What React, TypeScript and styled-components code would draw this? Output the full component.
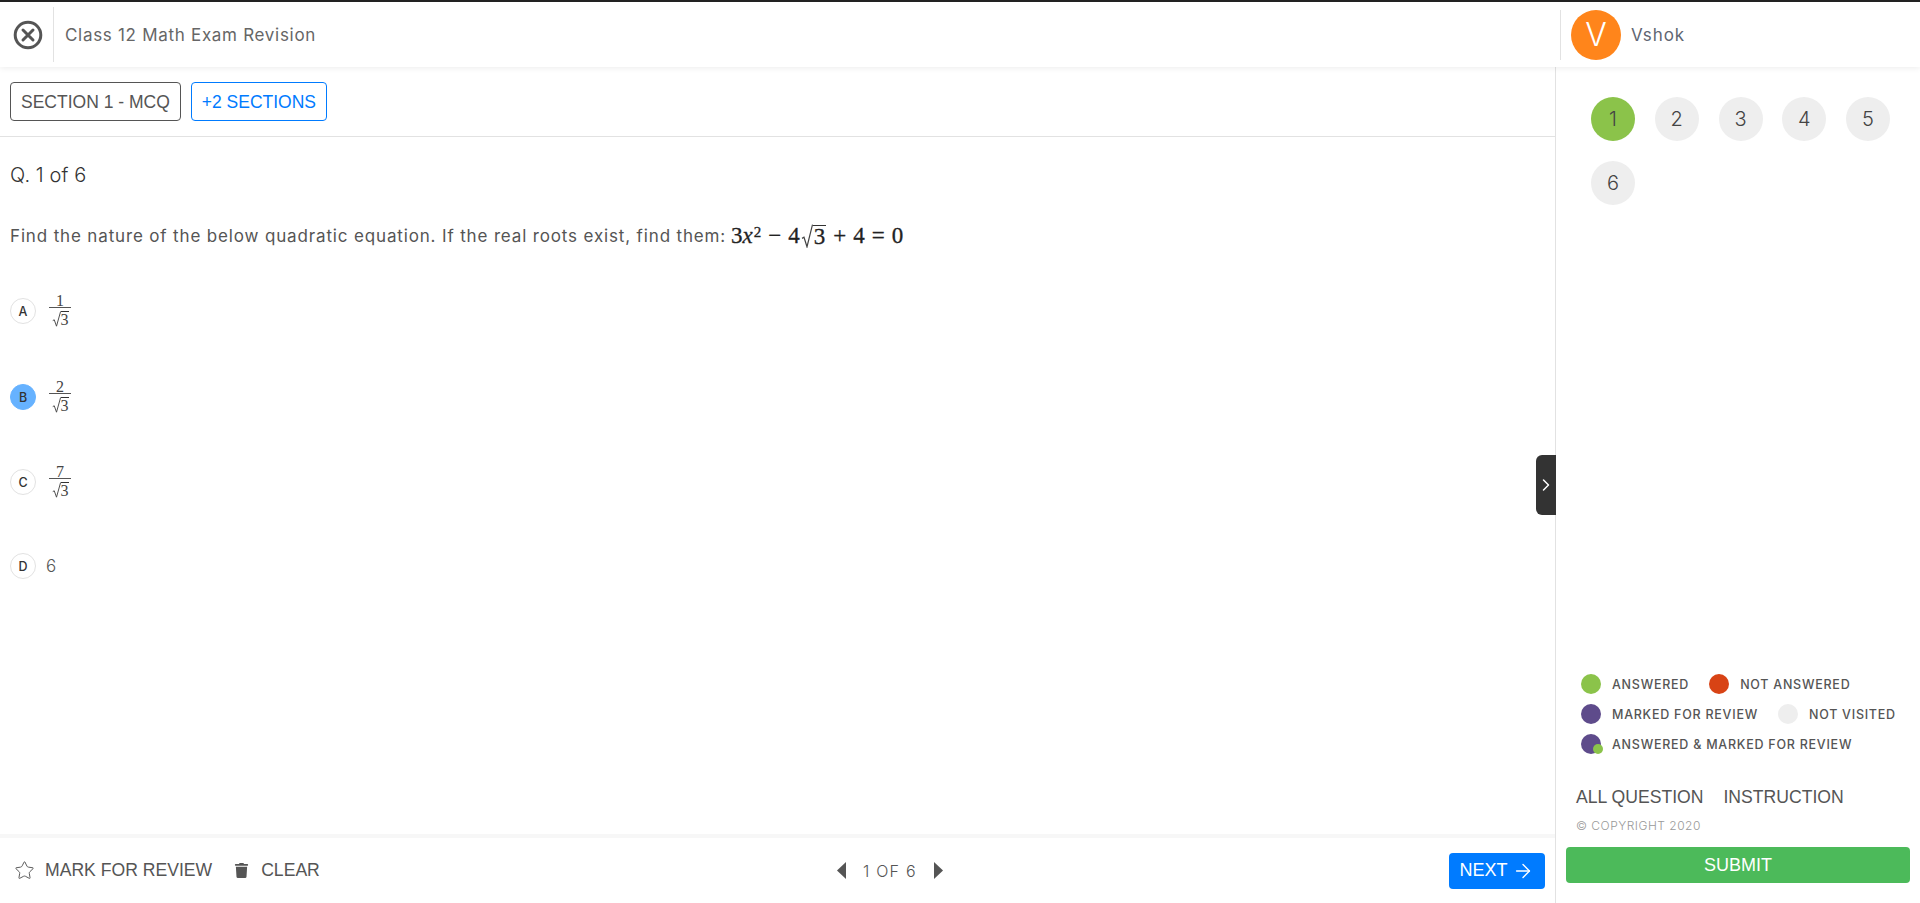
import styled, { createGlobalStyle } from 'styled-components'
import { ArrowRight, ChevronRight, Star } from 'lucide-react'
import { FaTrash } from 'react-icons/fa'

const GlobalStyle = createGlobalStyle`
  html, body {
    margin: 0;
    padding: 0;
    background: #fff;
    font-family: "Inter", "Liberation Sans", sans-serif;
  }
  * { box-sizing: border-box; }
`

const Page = styled.div`
  height: 903px;
  display: flex;
  flex-direction: column;
  overflow: hidden;
  border-top: 2px solid #222;
`

const Header = styled.header`
  height: 65px;
  flex-shrink: 0;
  display: flex;
  align-items: center;
  position: relative;
  z-index: 2;
  background: #fff;
  box-shadow: 0 1px 6px rgba(0, 0, 0, 0.08);
`

const CloseCell = styled.div`
  width: 54px;
  height: 55px;
  display: flex;
  align-items: center;
  justify-content: center;
  padding-left: 2px;
  border-right: 1px solid #e2e2e2;
`

const CourseTitle = styled.div`
  flex: 1;
  padding-left: 11px;
  font-size: 17px;
  color: #666;
  letter-spacing: 0.7px;
`

const UserCell = styled.div`
  width: 360px;
  height: 50px;
  display: flex;
  align-items: center;
  gap: 10px;
  padding-left: 10px;
  border-left: 1px solid #e2e2e2;
`

const Avatar = styled.div`
  width: 50px;
  height: 50px;
  border-radius: 50%;
  background: #ff851b;
  color: #fff;
  font-size: 32px;
  font-weight: 300;
  display: flex;
  align-items: center;
  justify-content: center;
`

const UserName = styled.div`
  font-size: 17px;
  color: #5f6672;
  letter-spacing: 0.9px;
`

const Body = styled.div`
  flex: 1;
  min-height: 0;
  display: flex;
`

const Main = styled.main`
  width: 1556px;
  position: relative;
  display: flex;
  flex-direction: column;
  border-right: 1px solid #e2e2e2;
`

const SectionBar = styled.div`
  height: 70px;
  flex-shrink: 0;
  display: flex;
  align-items: center;
  gap: 10px;
  padding: 0 10px 0;
  border-bottom: 1px solid #e2e2e2;
`

const SectionButton = styled.button<{ $active?: boolean }>`
  height: 39px;
  padding: 1px 10px 0;
  background: #fff;
  border-radius: 4px;
  border: 1px solid ${(p) => (p.$active ? '#555' : '#007bff')};
  color: ${(p) => (p.$active ? '#555' : '#007bff')};
  font-family: "Liberation Sans", sans-serif;
  font-size: 17.5px;
`

const QuestionArea = styled.section`
  flex: 1;
  min-height: 0;
  padding: 0 10px;
`

const QuestionCount = styled.div`
  margin-top: 26px;
  height: 24px;
  line-height: 24px;
  font-size: 20px;
  font-weight: 300;
  color: #333;
  letter-spacing: 0.1px;
`

const QuestionText = styled.div`
  margin-top: 34px;
  height: 30px;
  display: flex;
  align-items: center;
  gap: 5px;
  font-size: 17px;
  color: #555;
  letter-spacing: 0.85px;
`

const MathLine = styled.span`
  display: inline-flex;
  align-items: center;
  font-family: "Liberation Serif", serif;
  font-size: 23px;
  letter-spacing: 0;
  color: #222;
  -webkit-text-stroke: 0.3px #222;
`

const Sup = styled.sup`
  font-size: 15px;
  line-height: 0;
  position: relative;
  top: -4px;
  margin-left: 1px;
`

const MathOp = styled.span`
  margin: 0 7px;
`

const Surd = styled.span`
  display: inline-flex;
  align-items: flex-end;
  margin-left: 1px;
`

const SurdBody = styled.span<{ $small?: boolean }>`
  border-top: 1px solid #333;
  padding: 0 ${(p) => (p.$small ? '0' : '1px')};
  line-height: ${(p) => (p.$small ? '15px' : '22px')};
`

const OptionList = styled.div`
  margin-top: 17px;
  display: flex;
  flex-direction: column;
`

const OptionRow = styled.div<{ $height: number }>`
  height: ${(p) => p.$height}px;
  display: flex;
  align-items: center;
  gap: 13px;
`

const OptionBadge = styled.div<{ $selected?: boolean }>`
  width: 26px;
  height: 26px;
  flex-shrink: 0;
  border-radius: 50%;
  display: flex;
  align-items: center;
  justify-content: center;
  font-size: 12.5px;
  font-weight: 500;
  color: #333;
  background: ${(p) => (p.$selected ? '#66b2ff' : '#fff')};
  border: 1px solid ${(p) => (p.$selected ? '#66b2ff' : '#e2e2e2')};
`

const Fraction = styled.span`
  display: inline-flex;
  flex-direction: column;
  align-items: center;
  width: 22px;
  padding-bottom: 2px;
  font-family: "Liberation Serif", serif;
  font-size: 16px;
  color: #444;
`

const Numerator = styled.span`
  width: 100%;
  height: 15px;
  line-height: 15px;
  text-align: center;
  border-bottom: 1px solid #555;
`

const Denominator = styled.span`
  margin-top: 3px;
  display: flex;
  align-items: flex-end;
`

const PlainAnswer = styled.span`
  margin-left: -3px;
  font-size: 17px;
  font-weight: 300;
  color: #555;
`

const Footer = styled.footer`
  height: 69px;
  flex-shrink: 0;
  display: flex;
  justify-content: space-between;
  align-items: center;
  padding: 0 10px 0 14px;
  border-top: 4px solid #f7f7f7;
`

const FooterLeft = styled.div`
  display: flex;
  align-items: center;
  gap: 22px;
`

const FooterAction = styled.button<{ $gap: number }>`
  display: flex;
  align-items: center;
  gap: ${(p) => p.$gap}px;
  padding: 0;
  border: 0;
  background: none;
  font-family: "Liberation Sans", sans-serif;
  font-size: 17.6px;
  color: #555;
`

const Pager = styled.div`
  display: flex;
  align-items: center;
  gap: 17px;
  margin-left: 11px;
  color: #555;
  font-size: 16px;
  font-weight: 300;
`

const PagerText = styled.span`
  letter-spacing: 1.2px;
`

const NextButton = styled.button`
  width: 96px;
  height: 36px;
  display: flex;
  align-items: center;
  justify-content: center;
  gap: 5px;
  border: 0;
  border-radius: 4px;
  background: #007bff;
  color: #fff;
  font-family: "Liberation Sans", sans-serif;
  font-size: 18px;
`

const DrawerToggle = styled.div`
  position: absolute;
  right: -1px;
  top: 388px;
  width: 20px;
  height: 60px;
  border-radius: 6px 0 0 6px;
  background: #333;
  color: #fff;
  display: flex;
  align-items: center;
  justify-content: center;
`

const Aside = styled.aside`
  flex: 1;
  min-width: 0;
  display: flex;
  flex-direction: column;
  padding: 30px 10px 20px;
`

const NumberGrid = styled.div`
  display: flex;
  flex-wrap: wrap;
  gap: 20px 19.75px;
  padding-left: 25px;
`

const NumberDot = styled.div<{ $current?: boolean }>`
  width: 44px;
  height: 44px;
  border-radius: 50%;
  display: flex;
  align-items: center;
  justify-content: center;
  font-size: 20px;
  font-weight: 300;
  color: #444;
  background: ${(p) => (p.$current ? '#8bc34a' : '#eee')};
`

const Legend = styled.div`
  margin-top: auto;
  padding-left: 15px;
  display: flex;
  flex-direction: column;
  gap: 10px;
`

const LegendRow = styled.div`
  height: 20px;
  display: flex;
  align-items: center;
`

const LegendDot = styled.span<{ $color: string; $badge?: boolean }>`
  position: relative;
  width: 20px;
  height: 20px;
  flex-shrink: 0;
  border-radius: 50%;
  background: ${(p) => p.$color};
  margin-right: 11px;

  ${(p) =>
    p.$badge &&
    `&::after {
      content: "";
      position: absolute;
      right: -2px;
      bottom: 0;
      width: 10px;
      height: 10px;
      border-radius: 50%;
      background: #8bc34a;
    }`}
`

const LegendLabel = styled.span`
  font-size: 12.5px;
  font-weight: 500;
  color: #555;
  margin-right: 20px;
  letter-spacing: 0.75px;
  white-space: nowrap;
`

const AsideLinks = styled.div`
  margin-top: 33px;
  padding-left: 10px;
  display: flex;
  gap: 20px;
  font-family: "Liberation Sans", sans-serif;
  font-size: 17.6px;
  color: #555;
`

const Copyright = styled.div`
  margin-top: 10px;
  padding-left: 10px;
  font-size: 12px;
  font-weight: 300;
  color: #999;
  letter-spacing: 0.5px;
`

const SubmitButton = styled.button`
  width: 344px;
  height: 36px;
  margin-top: 14px;
  border: 0;
  border-radius: 4px;
  background: #4cba5a;
  color: #fff;
  font-family: "Liberation Sans", sans-serif;
  font-size: 18px;
`

const CloseIcon = () => (
  <svg width="30" height="30" viewBox="0 0 30 30" fill="none" stroke="#555" strokeWidth="3">
    <circle cx="15" cy="15" r="12.8" />
    <path d="M10 10 L20 20 M20 10 L10 20" strokeLinecap="round" />
  </svg>
)

const Caret = ({ points }: { points: string }) => (
  <svg width="9" height="17" viewBox="0 0 9 17" fill="#555">
    <polygon points={points} />
  </svg>
)

const RadicalSign = ({ height, width }: { height: number; width: number }) => (
  <svg width={width} height={height} viewBox="0 0 12 20" preserveAspectRatio="none" fill="none" stroke="#444">
    <path d="M1 12 L3 11 L6 19 L11.5 0.5" strokeWidth="1.2" />
  </svg>
)

const Root3 = () => (
  <Denominator>
    <RadicalSign width={9} height={16} />
    <SurdBody $small>3</SurdBody>
  </Denominator>
)

const options = [
  { key: 'A', numerator: '1', height: 86 },
  { key: 'B', numerator: '2', height: 86, selected: true },
  { key: 'C', numerator: '7', height: 84 },
]

const App = () => {
  return (
    <>
      <GlobalStyle />
      <Page>
        <Header>
          <CloseCell>
            <CloseIcon />
          </CloseCell>
          <CourseTitle>Class 12 Math Exam Revision</CourseTitle>
          <UserCell>
            <Avatar>V</Avatar>
            <UserName>Vshok</UserName>
          </UserCell>
        </Header>
        <Body>
          <Main>
            <SectionBar>
              <SectionButton $active>SECTION 1 - MCQ</SectionButton>
              <SectionButton>+2 SECTIONS</SectionButton>
            </SectionBar>
            <QuestionArea>
              <QuestionCount>Q. 1 of 6</QuestionCount>
              <QuestionText>
                Find the nature of the below quadratic equation. If the real roots exist, find them:
                <MathLine>
                  3<i>x</i>
                  <Sup>2</Sup>
                  <MathOp>−</MathOp>4
                  <Surd>
                    <RadicalSign width={12} height={24} />
                    <SurdBody>3</SurdBody>
                  </Surd>
                  <MathOp>+</MathOp>4<MathOp>=</MathOp>0
                </MathLine>
              </QuestionText>
              <OptionList>
                {options.map((o) => (
                  <OptionRow key={o.key} $height={o.height}>
                    <OptionBadge $selected={o.selected}>{o.key}</OptionBadge>
                    <Fraction>
                      <Numerator>{o.numerator}</Numerator>
                      <Root3 />
                    </Fraction>
                  </OptionRow>
                ))}
                <OptionRow $height={84}>
                  <OptionBadge>D</OptionBadge>
                  <PlainAnswer>6</PlainAnswer>
                </OptionRow>
              </OptionList>
            </QuestionArea>
            <Footer>
              <FooterLeft>
                <FooterAction $gap={10}>
                  <Star size={21} strokeWidth={1.1} />
                  MARK FOR REVIEW
                </FooterAction>
                <FooterAction $gap={12}>
                  <FaTrash size={15} />
                  CLEAR
                </FooterAction>
              </FooterLeft>
              <Pager>
                <Caret points="9,0 9,17 0,8.5" />
                <PagerText>1 OF 6</PagerText>
                <Caret points="0,0 0,17 9,8.5" />
              </Pager>
              <NextButton>
                NEXT
                <ArrowRight size={22} strokeWidth={1.5} />
              </NextButton>
            </Footer>
            <DrawerToggle>
              <ChevronRight size={26} strokeWidth={1.8} />
            </DrawerToggle>
          </Main>
          <Aside>
            <NumberGrid>
              {[1, 2, 3, 4, 5, 6].map((n) => (
                <NumberDot key={n} $current={n === 1}>
                  {n}
                </NumberDot>
              ))}
            </NumberGrid>
            <Legend>
              <LegendRow>
                <LegendDot $color="#8bc34a" />
                <LegendLabel>ANSWERED</LegendLabel>
                <LegendDot $color="#d84315" />
                <LegendLabel>NOT ANSWERED</LegendLabel>
              </LegendRow>
              <LegendRow>
                <LegendDot $color="#5e4b8b" />
                <LegendLabel>MARKED FOR REVIEW</LegendLabel>
                <LegendDot $color="#eee" />
                <LegendLabel>NOT VISITED</LegendLabel>
              </LegendRow>
              <LegendRow>
                <LegendDot $color="#5e4b8b" $badge />
                <LegendLabel>ANSWERED &amp; MARKED FOR REVIEW</LegendLabel>
              </LegendRow>
            </Legend>
            <AsideLinks>
              <span>ALL QUESTION</span>
              <span>INSTRUCTION</span>
            </AsideLinks>
            <Copyright>© COPYRIGHT 2020</Copyright>
            <SubmitButton>SUBMIT</SubmitButton>
          </Aside>
        </Body>
      </Page>
    </>
  )
}

export default App
